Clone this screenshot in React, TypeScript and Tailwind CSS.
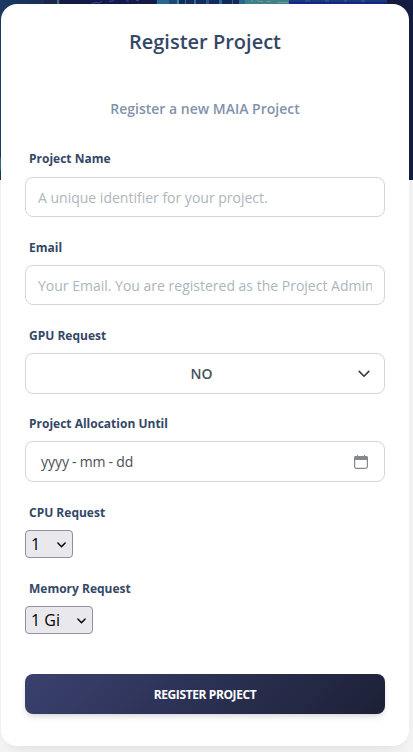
import React from "react";

const labelCls = "ml-1 block h-5 text-[12px] leading-5 font-bold text-[#344767]";
const fieldCls =
  "block w-full rounded-lg border border-[#d2d6da] bg-white px-3 text-[14px] leading-[22px] text-[#495057] placeholder:text-[#adb5bd] placeholder:opacity-100 outline-none";

function Chevron({ className, weight = 1.8 }: { className: string; weight?: number }) {
  return (
    <svg className={className} viewBox="0 0 12 8" fill="none" stroke="currentColor" strokeWidth={weight}>
      <path d="M1.2 1.4 6 6.2l4.8-4.8" strokeLinecap="round" strokeLinejoin="round" />
    </svg>
  );
}

function Hero() {
  return (
    <svg className="absolute top-0 left-0 h-[180px] w-full" viewBox="0 0 413 180" preserveAspectRatio="none">
      <defs>
        <linearGradient id="sky" x1="0" x2="1" y1="0" y2="0">
          <stop offset="0" stopColor="#1b3a63" />
          <stop offset="0.12" stopColor="#1a2f55" />
          <stop offset="0.5" stopColor="#152c5e" />
          <stop offset="0.93" stopColor="#161d3c" />
          <stop offset="1" stopColor="#131d42" />
        </linearGradient>
      </defs>
      <rect width="413" height="180" fill="url(#sky)" />
      <rect x="44" y="0" width="13" height="4" fill="#1b2648" />
      <rect x="57" y="0" width="2" height="4" fill="#3d6f86" />
      <rect x="60" y="0" width="96" height="4" fill="#151b46" />
      <path d="M92 3.5l4-1 3 .5 3-2M109 1.5l5-1M126 1h3M136 .5h3" stroke="#2f46a8" fill="none" />
      <rect x="157" y="0" width="12" height="4" fill="#2a6690" />
      <rect x="169" y="0" width="8" height="4" fill="#1e4a78" />
      <rect x="177" y="0" width="2" height="4" fill="#3b87a8" />
      <rect x="185" y="0" width="1" height="4" fill="#3472a0" />
      <rect x="194" y="0" width="2" height="4" fill="#2f6f98" />
      <rect x="206" y="0" width="3" height="4" fill="#28558a" />
      <rect x="219" y="0" width="3" height="4" fill="#2d6897" />
      <rect x="232" y="0" width="1" height="4" fill="#2d6897" />
      <rect x="239" y="0" width="6" height="4" fill="#2c6a8c" />
      <rect x="245" y="0" width="44" height="4" fill="#3e8488" />
      <path d="M252 0v2M257 0l2 1.5h4M267 1.5h4M277 2.5h11" stroke="#7695a0" fill="none" />
      <rect x="289" y="0" width="98" height="4" fill="#1c3a78" />
      <rect x="289" y="2" width="98" height="1.5" fill="#141f96" />
      <path d="M305 1h5M325 1h4M344 1h3M361 1h4" stroke="#2f6b8a" fill="none" />
      <rect x="0" y="158" width="1" height="12" fill="#2e7377" />
    </svg>
  );
}

export default function App() {
  return (
    <div className="relative h-[752px] w-full overflow-hidden bg-[#f6f6f7] font-['Open_Sans','Noto_Sans',sans-serif]">
      <Hero />
      <div className="relative mt-1 mr-1 ml-px h-[742px] rounded-2xl bg-white px-6 shadow-[0_8px_26px_-4px_rgba(20,20,20,0.07),0_8px_9px_-5px_rgba(20,20,20,0.03)]">
        <h5 className="pt-6 text-center text-[20px] leading-[27px] font-semibold text-[#344767]">Register Project</h5>
        <p className="mt-10 h-7 text-center text-[14px] leading-[28px] font-semibold text-[#8392ab]">
          Register a new MAIA Project
        </p>

        <form className="mt-[26px]" onSubmit={(e) => e.preventDefault()}>
          <label className={labelCls}>Project Name</label>
          <input className={`${fieldCls} mt-[8px] h-10`} placeholder="A unique identifier for your project." />

          <label className={`${labelCls} mt-[21px]`}>Email</label>
          <input
            className={`${fieldCls} mt-[7px] h-10`}
            placeholder="Your Email. You are registered as the Project Admin"
          />

          <label className={`${labelCls} mt-[21px]`}>GPU Request</label>
          <button type="button" className={`${fieldCls} mt-[7px] flex h-[41px] items-center`}>
            <span className="flex-1 pl-[7px] text-center font-semibold">NO</span>
            <Chevron className="mr-[2px] h-2 w-3 text-[#343a40]" weight={1.6} />
          </button>

          <label className={`${labelCls} mt-5`}>Project Allocation Until</label>
          <div className={`${fieldCls} mt-[7px] flex h-[41px] items-center justify-between`}>
            <span className="pl-[3px] [word-spacing:-0.6px]">yyyy - mm - dd</span>
            <svg className="mr-[4px] h-[14px] w-[14px]" viewBox="0 0 14 14" fill="none">
              <rect x="0.6" y="1.6" width="12.8" height="11.8" rx="1.8" stroke="#84898e" strokeWidth="1.2" />
              <path d="M0 5V3a2 2 0 0 1 2-2h10a2 2 0 0 1 2 2v2z" fill="#84898e" />
              <path d="M3.5 0v2M10.5 0v2" stroke="#84898e" />
            </svg>
          </div>

          <label className={`${labelCls} mt-[21px]`}>CPU Request</label>
          <button
            type="button"
            className="mt-[7px] flex h-7 w-12 items-center justify-between rounded border border-[#8f8f9d] bg-[#e9e9ed] pr-[6px] pl-[5px] text-[16px] text-black"
          >
            <span>1</span>
            <Chevron className="mt-px h-[6px] w-[9px]" weight={1.9} />
          </button>

          <label className={`${labelCls} mt-[21px]`}>Memory Request</label>
          <button
            type="button"
            className="mt-[7px] flex h-7 w-[68px] items-center justify-between rounded border border-[#8f8f9d] bg-[#e9e9ed] pr-[6px] pl-[5px] text-[16px] text-black"
          >
            <span>1 Gi</span>
            <Chevron className="mt-px h-[6px] w-[9px]" weight={1.9} />
          </button>

          <button
            type="submit"
            className="mt-10 block h-10 w-full rounded-lg bg-[linear-gradient(135deg,#3a416f,#1c2036)] pt-px text-center text-[12px] font-bold tracking-[-0.4px] text-white uppercase shadow-[0_4px_7px_-1px_rgba(0,0,0,0.11),0_2px_4px_-1px_rgba(0,0,0,0.07)]"
          >
            Register Project
          </button>
        </form>
      </div>
    </div>
  );
}
